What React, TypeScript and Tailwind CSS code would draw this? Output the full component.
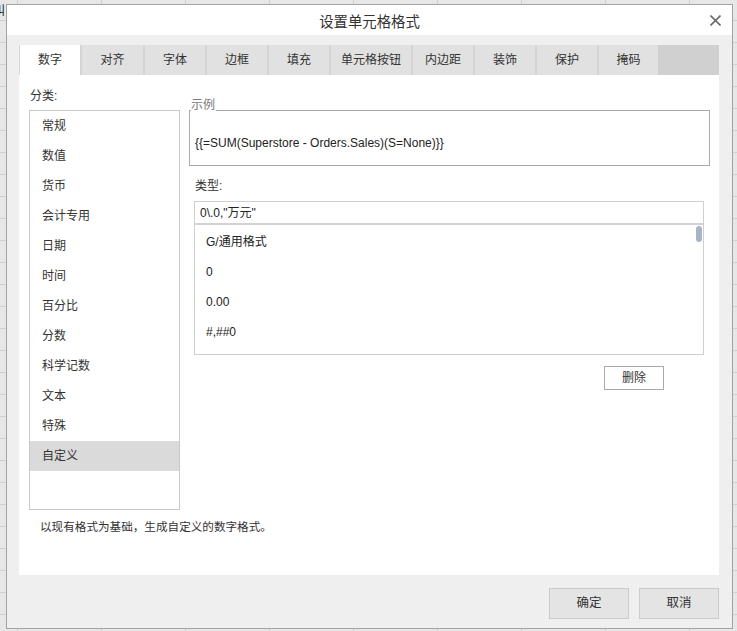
import React from "react";

const FONT = "font-['Liberation_Sans','Noto_Sans_CJK_SC',sans-serif]";

const tabs: { label: string; w: string; active?: boolean }[] = [
  { label: "数字", w: "w-[61px]", active: true },
  { label: "对齐", w: "w-[63px]" },
  { label: "字体", w: "w-[62px]" },
  { label: "边框", w: "w-[62px]" },
  { label: "填充", w: "w-[62px]" },
  { label: "单元格按钮", w: "w-[82px]" },
  { label: "内边距", w: "w-[62px]" },
  { label: "装饰", w: "w-[62px]" },
  { label: "保护", w: "w-[62px]" },
  { label: "掩码", w: "w-[61px]" },
];

const categories = [
  "常规",
  "数值",
  "货币",
  "会计专用",
  "日期",
  "时间",
  "百分比",
  "分数",
  "科学记数",
  "文本",
  "特殊",
  "自定义",
];

const formats = ["G/通用格式", "0", "0.00", "#,##0"];

export default function App() {
  return (
    <div
      className={`relative w-[737px] h-[631px] overflow-hidden bg-[#e7e7e7] bg-[linear-gradient(to_right,#d0d0d0_1px,transparent_1px),linear-gradient(to_bottom,#d0d0d0_1px,transparent_1px)] bg-size-[84px_22px] bg-position-[17px_20px] text-[#333] ${FONT}`}
    >
      <span className="absolute left-[-7px] top-[4px] text-[12px] leading-[14px] text-[#222]">叫</span>

      {/* Dialog */}
      <div className="absolute left-[6px] top-[4px] w-[727px] h-[625px] border border-[#a3a3a3] bg-[#efefef] flex flex-col">
        {/* Title bar */}
        <div className="relative h-[30px] bg-white flex items-center justify-center shrink-0">
          <span className="text-[14.4px] leading-[18px] text-[#333] mt-[3px]">设置单元格格式</span>
          <svg
            className="absolute right-[11px] top-[10px]"
            width="11"
            height="11"
            viewBox="0 0 11 11"
          >
            <path d="M0.5 0.5 L10.5 10.5 M10.5 0.5 L0.5 10.5" stroke="#6a6a6a" strokeWidth="1.6" />
          </svg>
        </div>

        {/* Body */}
        <div className="pl-[12px] pr-[13px] pt-[10px] shrink-0">
          {/* Tabs */}
          <div className="flex h-[30px] bg-[#d0d0d0]">
            {tabs.map((t) => (
              <div
                key={t.label}
                className={`${t.w} h-full flex items-center justify-center text-[12px] leading-[14px] ${
                  t.active
                    ? "bg-white border-l border-[#d8d8d8]"
                    : "bg-[#e1e1e1] border-l-2 border-[#d4d4d4]"
                }`}
              >
                {t.label}
              </div>
            ))}
            <div className="flex-1 bg-[#d0d0d0]" />
          </div>

          {/* Panel */}
          <div className="h-[500px] bg-white pl-[10px] pt-[12px]">
            <div className="text-[12px] leading-[18px] pl-[1px]">分类:</div>
            <div className="flex mt-[5px]">
              {/* Category list */}
              <div className="w-[151px] h-[400px] border border-[#c9c9c9]">
                {categories.map((c) => (
                  <div
                    key={c}
                    className={`h-[30px] flex items-center pl-[12px] text-[12px] ${
                      c === "自定义" ? "bg-[#dadada]" : ""
                    }`}
                  >
                    {c}
                  </div>
                ))}
              </div>

              {/* Right side */}
              <div className="ml-[9px] w-[521px] flex flex-col">
                <div className="relative h-[56px] border border-[#a9a9a9] pl-[5px] pt-[24px]">
                  <span className="absolute left-[1px] top-[-13px] bg-white text-[12px] leading-[14px] text-[#7a7a7a] pr-[1px]">
                    示例
                  </span>
                  <div className="text-[12px] leading-[16px] text-[#222]">
                    {"{{=SUM(Superstore - Orders.Sales)(S=None)}}"}
                  </div>
                </div>

                <div className="pl-[5px] w-[515px]">
                  <div className="text-[12px] leading-[18px] mt-[11px] pl-[1px]">类型:</div>
                  <div className="mt-[6px] h-[24px] border border-[#cfcfcf] border-b-2 border-b-[#d2d2d2] flex items-center pl-[5px] text-[12px] text-[#222]">
                    0\.0,"万元"
                  </div>
                  <div className="relative h-[130px] border border-t-0 border-[#cfcfcf] pt-[2px]">
                    {formats.map((f) => (
                      <div key={f} className="h-[30px] flex items-center pl-[11px] text-[12px] text-[#222]">
                        {f}
                      </div>
                    ))}
                    <div className="absolute right-[1px] top-[1px] w-[6px] h-[16px] rounded-full bg-[#a8b5c5]" />
                  </div>
                  <div className="flex justify-end pr-[40px] mt-[11px]">
                    <button className="w-[60px] h-[24px] border border-[#a9a9a9] bg-white text-[12px] text-[#333]">
                      删除
                    </button>
                  </div>
                </div>
              </div>
            </div>
            <div className="mt-[8px] pl-[11px] text-[11.6px] leading-[18px]">
              以现有格式为基础，生成自定义的数字格式。
            </div>
          </div>
        </div>

        {/* Footer */}
        <div className="flex justify-end gap-[10px] pr-[13px] pt-[13px]">
          <button className="w-[80px] h-[31px] border border-[#cbcbcb] bg-[#e4e4e4] text-[12.5px] text-[#333]">
            确定
          </button>
          <button className="w-[80px] h-[31px] border border-[#cbcbcb] bg-[#e4e4e4] text-[12.5px] text-[#333]">
            取消
          </button>
        </div>
      </div>
    </div>
  );
}
